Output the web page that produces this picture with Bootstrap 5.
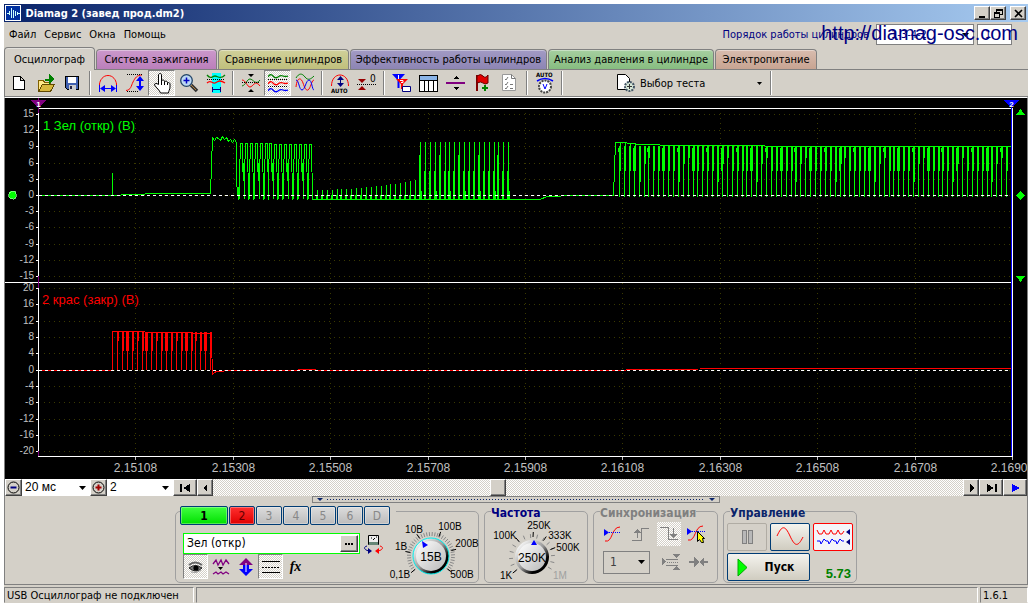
<!DOCTYPE html>
<html lang="ru">
<head>
<meta charset="utf-8">
<meta name="viewport" content="width=device-width, initial-scale=1">
<title>Diamag 2</title>
<link rel="stylesheet" href="https://cdn.jsdelivr.net/npm/bootstrap@5.3.0/dist/css/bootstrap.min.css">
<style>
  :root { --face:#d4d0c8; --shade:#808080; --navy:#0a246a; }
  body { background:#fff; color:#000; font:11px/13px "DejaVu Sans Condensed","DejaVu Sans",sans-serif; padding:4px; }
  button, input, select { font:inherit; color:inherit; border-radius:0; }
  svg { display:block; flex:none; }
  .pix { shape-rendering:crispEdges; }
  .app { background:var(--face); }
  .titlebar { height:18px; padding:0 2px 0 1px; background:linear-gradient(90deg,#0a246a,#a6caf0); color:#fff; font-size:11px; }
  .raised { background:var(--face); border:1px solid; border-color:#fff #404040 #404040 #fff; box-shadow:inset -1px -1px 0 var(--shade); padding:0; display:flex; align-items:center; justify-content:center; }
  .winbtn { width:16px; height:14px; }
  .menubar { height:25px; padding:0 16px 0 5px; }
  .menubar a { color:#000; text-decoration:none; }
  .order { color:#000080; gap:3px; }
  .order select, .order input { height:21px; border:1px solid var(--shade); background-color:#fff; color:#000080; padding:0 4px; }
  .order select { width:98px; padding-left:14px; }
  .order input { width:35px; padding-left:7px; }
  .site { right:10px; top:-1px; font:20px/24px "Liberation Sans",Arial,sans-serif; color:#000080 !important; z-index:2; }
  .arrow { appearance:none; background:#fff url("data:image/svg+xml,%3Csvg xmlns='http://www.w3.org/2000/svg' width='7' height='4'%3E%3Cpath d='M0 0h7L3.500 4z'/%3E%3C/svg%3E") no-repeat right 4px center; }
  .pagetabs { height:23px; border-bottom:1px solid var(--shade); gap:1px; }
  .pagetabs button { height:20px; border:1px solid var(--shade); border-bottom:0; border-radius:4px 4px 0 0; padding:0; font-size:11px; white-space:nowrap; box-shadow:inset 0 1px 0 #ffffff60; }
  .pagetabs .current { height:23px; margin-bottom:-1px; background:var(--face); width:91px; }
  .t-ign { background:linear-gradient(#cb98cb,#bb7fbb); width:121px; }
  .t-cmp { background:linear-gradient(#d0d09a,#c0c07c); width:131px; }
  .t-eff { background:linear-gradient(#a29ac4,#8d85b4); width:197px; }
  .t-prs { background:linear-gradient(#a6cfa0,#87bd80); width:166px; }
  .t-pwr { background:linear-gradient(#d8bcae,#c8a492); width:102px; }
  .tools { height:27px; border-left:1px solid var(--shade); border-bottom:1px solid var(--shade); }
  .tools button { width:27px; height:26px; border:1px solid transparent; background:none; padding:0; display:flex; align-items:center; justify-content:center; }
  .tools .wide { width:156px; padding-left:4px; justify-content:flex-start; font-size:11px; margin-left:45px; }
  .tools .sep { width:8px; height:24px; }
  .sep::after { content:""; display:block; width:2px; height:24px; margin-left:3px; background:linear-gradient(90deg,var(--shade) 50%,#fff 50%); }
  .tools .down, .chan .tb.down { background:repeating-conic-gradient(#fff 0 25%,var(--face) 0 50%) 0 0/2px 2px; border:1px solid; border-color:var(--shade) #fff #fff var(--shade); }
  .scope { border-top:1px solid #fff; border-left:1px solid var(--shade); border-right:1px solid var(--shade); }
  .scope > svg { width:100%; height:auto; background:#000; }
  .scope text { font-family:"Liberation Sans",Arial,sans-serif; }
  .transport { height:17px; border-left:1px solid var(--shade); border-right:1px solid var(--shade); }
  .transport .raised { width:24px; height:17px; flex:none; }
  .transport .zoomer { width:17px; }
  .transport .stepper { width:16px; }
  .transport select { height:17px; border:0; padding:0 0 0 3px; width:66px; font:12px/15px "Liberation Sans",Arial,sans-serif; flex:none; }
  .transport .span { width:68px; }
  .scroller { appearance:none; min-width:0; height:17px; margin:0; background:repeating-conic-gradient(#fff 0 25%,var(--face) 0 50%) 0 0/2px 2px; }
  .scroller::-webkit-slider-thumb { appearance:none; width:16px; height:17px; background:var(--face); border:1px solid; border-color:#fff #404040 #404040 #fff; box-shadow:inset -1px -1px 0 var(--shade); }
  .controls { border-left:1px solid var(--shade); border-bottom:1px solid var(--shade); border-right:1px solid var(--shade); height:89px; }
  .grip { width:408px; height:7px; border:1px solid var(--shade); padding:0 4px; }
  .grip i { height:1px; background:repeating-linear-gradient(90deg,var(--navy) 0 1px,transparent 1px 3px); }
  .groups { gap:5px; }
  .panel { border:1px solid #a0a0a0; border-radius:5px; height:72px; margin-top:8px; }
  .panel h2 { font-size:12px; line-height:12px; font-weight:700; margin:-5px 0 0 6px; background:var(--face); width:max-content; }
  .p-chan { width:304px; } .p-freq { width:104px; } .p-sync { width:125px; } .p-ctl { width:134px; }
  .chsel { margin:-6px 0 0 4px; gap:1px; background:var(--face); width:216px; }
  .chsel button { width:26px; height:19px; padding:0; border:1px solid #003c74; border-radius:2px; box-shadow:inset 0 0 0 1px #ffffff50; background:linear-gradient(#dcdcdc,#bcbcbc); color:#888; font-size:12px; line-height:14px; }
  .chsel .g { width:48px; background:linear-gradient(#40ff40,#00e000); color:#000; font-weight:700; }
  .chsel .r { background:linear-gradient(#ff3030,#e00000); color:#600000; }
  .chan { width:204px; margin-left:7px; }
  .namebox { width:177px; height:21px; border:1px solid #0f0; background:#fff; }
  .namebox input { border:0; background:none; padding:0 3px; min-width:0; font-size:12px; }
  .namebox .raised { width:18px; height:17px; margin-right:1px; }
  .chan .tb { width:25px; height:25px; border:1px solid transparent; background:none; padding:0; display:flex; align-items:center; justify-content:center; }
  .fx { font:italic 700 14px "Liberation Serif",serif; }
  .knob text { font:10px "Liberation Sans",Arial,sans-serif; }
  .knob .reading { font-size:12px; }
  #volts { margin:6px 0 0 -10px; }
  .sync { padding:3px 5px; }
  .sync button { border:0; background:none; padding:0; width:28px; height:24px; display:flex; align-items:center; justify-content:center; }
  .sync .pick { width:24px; margin:0 2px; background:repeating-conic-gradient(#fff 0 25%,var(--face) 0 50%) 0 0/2px 2px; }
  .sync select { width:48px; height:23px; border:1px solid var(--shade); background-color:var(--face); padding:0 6px; font-size:12px; color:#404040; }
  .ctl { gap:2px 3px; padding:4px 3px 0; }
  .ctl button { width:40px; height:28px; padding:0; border:1px solid #003c74; border-radius:2px; background:linear-gradient(#f4f3ee,#d0ccc0); display:flex; align-items:center; justify-content:center; }
  .ctl .off { border-color:#b0aca4; background:var(--face); }
  .ctl .on { border-color:#f00; background:#f4f4f8; }
  .ctl .start { width:83px; font-size:12px; font-weight:700; gap:17px; padding-right:6px; }
  .ctl output { font:700 13px/15px "Liberation Sans",Arial,sans-serif; color:#008000; width:40px; text-align:right; padding:13px 2px 0 0; }
  .status { height:18px; padding-top:2px; gap:2px; }
  .status > div { border:1px solid; border-color:var(--shade) #fff transparent var(--shade); height:16px; padding:1px 2px; line-height:14px; }
  .s1 { width:190px; white-space:nowrap; } .s3 { width:48px; }
</style>
</head>
<body>
<main class="app d-flex flex-column">
  <header class="titlebar d-flex align-items-center">
    <svg class="pix" width="17" height="16" viewBox="0 0 17 16"><path fill="#0030a0" stroke="#fff" d="M.5.500h15v15H.500z"/><path d="M2 8h2M4.500 6v4M6.500 3v10M8.500 5v8M10.500 6v5M12.500 7v3M13 8h2" stroke="#cff" fill="none"/></svg>
    <strong class="me-auto">&nbsp;Diamag 2 (завед прод.dm2)</strong>
    <button class="raised winbtn" aria-label="Свернуть"><svg class="pix" width="9" height="9"><path d="M1 7h6v2H1z"/></svg></button>
    <button class="raised winbtn" aria-label="Восстановить"><svg class="pix" width="9" height="9" fill="none" stroke="#000"><path d="M2.500 3V.500h6v5H6M2 1.500h7M.500 3.500h5v5h-5zM0 4.500h6"/></svg></button>
    <button class="raised winbtn ms-1" aria-label="Закрыть"><svg width="9" height="9" stroke="#000" stroke-width="1.600"><path d="M1 1l7 7M8 1L1 8"/></svg></button>
  </header>

  <nav class="menubar d-flex align-items-center position-relative">
    <div class="d-flex gap-2 me-auto"><a href="#">Файл</a><a href="#">Сервис</a><a href="#">Окна</a><a href="#">Помощь</a></div>
    <form class="order d-flex align-items-center">
      <label for="order">Порядок работы цилиндров</label>
      <select id="order" class="arrow ms-1"><option>1-3-4-2</option></select>
      <input id="first" aria-label="Цилиндр" value="1">
    </form>
    <a class="site position-absolute" href="#">http://diamag-osc.com</a>
  </nav>

  <div class="pagetabs d-flex align-items-end" role="tablist">
    <button class="current" role="tab">Осциллограф</button>
    <button class="t-ign" role="tab">Система зажигания</button>
    <button class="t-cmp" role="tab">Сравнение цилиндров</button>
    <button class="t-eff" role="tab">Эффективность работы цилиндров</button>
    <button class="t-prs" role="tab">Анализ давления в цилиндре</button>
    <button class="t-pwr" role="tab">Электропитание</button>
  </div>

  <div class="tools d-flex align-items-center" role="toolbar">
    <button aria-label="Новый"><svg class="pix" width="14" height="16" fill="#fff" stroke="#000"><path d="M1.500 1.500h7l4 4v9h-11zM8.500 1.500v4h4"/></svg></button>
    <button aria-label="Открыть"><svg class="pix" width="20" height="20"><path d="M2.500 18.500v-11h5l1 2h6v3" fill="#ffe88a" stroke="#806000"/><path d="M2.500 18.500l4-7h12l-4 7z" fill="#d8b840" stroke="#604800"/><path d="M13 1l6 5-6 5V8h-4V6h4z" fill="#008000"/></svg></button>
    <button aria-label="Сохранить"><svg class="pix" width="15" height="15"><path d="M.500.500h13v13H2.500l-2-2z" fill="#4060b0" stroke="#000"/><path d="M3 1h8v6H3z" fill="#fff"/><path d="M4 9h7v5H4z" fill="#ccc"/><path d="M5 10h2v3H5z" fill="#224"/></svg></button>
    <span class="sep"></span>
    <button aria-label="Период"><svg width="20" height="20" fill="none"><path d="M1.500 14v-3C2 7 5 2.500 10 2.500S18 7 18.500 11v3" stroke="red"/><path d="M1.500 12v7M18.500 12v7M3 15.500h14" stroke="#00f"/><path d="M2 15.500l5-3.500v7zM18 15.500l-5-3.500v7z" fill="#00f"/></svg></button>
    <button aria-label="Амплитуда"><svg width="20" height="20" fill="none"><path d="M1 17.500C6 17 6 13 8 9s4-7 9-7" stroke="red"/><path d="M2 1.500h16M2 18.500h12" stroke="#000" stroke-dasharray="1 1"/><path d="M15 6v9" stroke="#00f" stroke-width="2"/><path d="M15 3l4 5h-8zM15 18l4-5h-8z" fill="#00f"/></svg></button>
    <button class="down" aria-label="Рука"><svg width="20" height="22" fill="#fff" stroke="#000"><path d="M6.500 12.500V3c0-2 3-2 3 0v6.500c0-2 3-2 3 0v1c0-2 3-1.500 3 0v1c0-1.500 2.500-1 2.500.500V15c0 3-1.500 3.500-1.500 6h-8c-1-3-4-5-6-8 0-2 2-2 4-.500z"/><path d="M9.500 9v4M12.500 10v3M15.500 11v2"/></svg></button>
    <button aria-label="Увеличить"><svg width="20" height="20"><path d="M12 12l6 6" stroke="#333" stroke-width="3.500"/><path d="M12 12l5 5" stroke="#b08040"/><circle cx="7.500" cy="7.500" r="5.800" fill="#bcd8f4" stroke="#246" stroke-width="1.300"/><path d="M4.500 7.500h6M7.500 4.500v6" stroke="#0000c0" stroke-width="1.500"/></svg></button>
    <button aria-label="Участок"><svg width="20" height="20" fill="none"><path d="M6 0h9v20H6z" fill="#0ff"/><path d="M1 2c4 5 5 1 8 1s5 4 10-1" stroke="#008000" stroke-width="1.300"/><path d="M1 10c4-4 5 1 8 0s4-4 10 0" stroke="red" stroke-width="1.300"/><path d="M1 6.500h18" stroke="#000" stroke-dasharray="1 1"/><path d="M7 16.500h7M6.500 14v5M14.500 14v5" stroke="#000080"/></svg></button>
    <span class="sep"></span>
    <button aria-label="Совместить"><svg width="20" height="20" fill="none"><path d="M1 13c4-1 5-7 8-7s6 7 10 1" stroke="#008000"/><path d="M1 7c4 0 5 7 8 7s5-8 10-1" stroke="red"/><path d="M1 9.500h18" stroke="#000" stroke-dasharray="1 1"/><path d="M7 1h6l-3 3zM7 19h6l-3-3z" fill="#000"/></svg></button>
    <button class="down" aria-label="Разделить"><svg width="20" height="20" fill="none"><path d="M0 4q2.500-4 5-1t5 1 5-1 5 0" stroke="#008000" stroke-width="1.300"/><path d="M0 11q2.500-4 5-1t5 1 5-1 5 0" stroke="red" stroke-width="1.300"/><path d="M0 18q2.500-4 5-1t5 1 5-1 5 0" stroke="#00f" stroke-width="1.300"/><path d="M0 6.500h20M0 13.500h20" stroke="#000" stroke-dasharray="1 1"/></svg></button>
    <button aria-label="Наложить"><svg width="20" height="20" fill="none"><path d="M1 5c3-5 6-5 9-1s6 2 9-1" stroke="#008000"/><path d="M1 14C2 4 6 4 8 10s4 9 6 6 3-9 5-9" stroke="red"/><path d="M1 7c3 0 3 10 6 10s4-10 7-10 3 10 5 10" stroke="#00f"/></svg></button>
    <span class="sep"></span>
    <button aria-label="Автомасштаб"><svg width="20" height="21" fill="none"><path d="M1.500 13c0-7 4-11 8.500-11s8.500 4 8.500 11" stroke="red"/><path d="M10.500 4v8" stroke="#000080"/><path d="M7 7l3.500-4L14 7zM7 10l3.500 4 3.500-4z" fill="#000080"/><text x="1" y="20" font-size="6" font-weight="700" fill="#000">AUTO</text></svg></button>
    <button aria-label="Ноль"><svg width="20" height="20"><path d="M0 11.500h20" stroke="#000" stroke-dasharray="1 1"/><path d="M1 6h8l-4 4zM1 17h8l-4-4z" fill="#900"/><text x="13" y="9" font-size="10">0</text></svg></button>
    <span class="sep"></span>
    <button aria-label="Метки"><svg width="20" height="20"><path d="M0 1h13L7.500 7v8h-2V7z" fill="#00f"/><path d="M4 6h12l-5 5v5H9v-5z" fill="red"/><path d="M6.500 2v4M8 7.500h3v2H9" stroke="#fff" fill="none"/><path d="M10.500 13.500h8v5h-8z" fill="#fff" stroke="#000080"/></svg></button>
    <button aria-label="Таблица"><svg class="pix" width="19" height="17"><path d="M.500.500h18v16H.500z" fill="#fff" stroke="#000"/><path d="M1 1h17v4H1z" fill="#8ab4e8"/><path d="M.500 5.500h18M5.500 5v11M9.500 5v11M14.500 5v11" stroke="#000"/></svg></button>
    <button aria-label="Линия"><svg class="pix" width="19" height="20"><path d="M0 9h19v2H0z" fill="#800080"/><path d="M7 6h6l-3-3zM7 14h6l-3 3z"/></svg></button>
    <button aria-label="Флаг"><svg width="20" height="20"><path d="M4 2v16" stroke="#800000" stroke-width="2"/><path d="M4 3q4-3 6 0t5-1v8q-3 2-5 0t-6 0z" fill="#e00000" stroke="#600"/><path d="M12 12v6M9 15h6" stroke="#008000" stroke-width="2"/></svg></button>
    <button aria-label="Список"><svg width="15" height="18" fill="none"><path d="M.500.500h9l4 4v12H.500z" fill="#fff" stroke="#999"/><path d="M3 5l1 1 2-3M3 10l1 1 2-3M3 14l1 1 2-3M8 10.500h3M8 14.500h3M9.500.500v4h4" stroke="#777"/></svg></button>
    <span class="sep"></span>
    <button aria-label="Автовольты"><svg width="20" height="22"><text x="1" y="5" font-size="6" font-weight="700">AUTO</text><path d="M2 9q8-5 16 0" stroke="#00f" fill="none" stroke-width="1.500"/><circle cx="10" cy="14.500" r="6" fill="#fff" stroke="#444" stroke-width="2" stroke-dasharray="2 1"/><path d="M8 12l2 5 2-5" stroke="#00f" fill="none"/></svg></button>
    <span class="sep"></span>
    <button class="wide"><svg width="20" height="20"><path d="M1.500 1.500h8l4 4v11h-12z" fill="#fff" stroke="#000"/><circle cx="13.500" cy="13.500" r="4.500" fill="#d8e8d8" stroke="#456" stroke-width="2" stroke-dasharray="2 1"/><path d="M13.500 11v5M11 13.500h5" stroke="#333"/></svg><span class="ms-1 me-auto">Выбор теста</span><svg class="me-1" width="5" height="3"><path d="M0 0h5L2.500 3z"/></svg></button>
    <span class="sep"></span>
  </div>

  <section class="scope">
    <svg class="pix" viewBox="5 98 1022 381" id="plot" role="img" aria-label="Осциллограмма"></svg>
  </section>

  <div class="transport d-flex align-items-center">
    <button class="raised zoomer" aria-label="Сжать"><svg width="13" height="13" fill="none" stroke="#000"><circle cx="6.500" cy="6.500" r="5.500"/><path d="M3.500 6.500h6" stroke="#000080" stroke-width="2"/></svg></button>
    <select class="arrow span" aria-label="Развёртка"><option>20 мс</option></select>
    <button class="raised zoomer" aria-label="Растянуть"><svg width="13" height="13" fill="none" stroke="#000"><circle cx="6.500" cy="6.500" r="5.500"/><path d="M3.500 6.500h6M6.500 3.500v6" stroke="#a00000" stroke-width="2"/></svg></button>
    <select class="arrow" aria-label="Масштаб"><option>2</option></select>
    <button class="raised" aria-label="В начало"><svg class="pix" width="11" height="8"><path d="M0 0h2v8H0zM10 0v8L3 4z"/></svg></button>
    <button class="raised stepper" aria-label="Назад"><svg class="pix" width="5" height="8"><path d="M4 0v8L0 4z"/></svg></button>
    <input class="scroller flex-grow-1" type="range" min="0" max="1000" value="377" aria-label="Прокрутка">
    <button class="raised stepper" aria-label="Вперёд"><svg class="pix" width="5" height="8"><path d="M1 0v8l4-4z"/></svg></button>
    <button class="raised" aria-label="В конец"><svg class="pix" width="11" height="8"><path d="M9 0h2v8H9zM1 0v8l7-4z"/></svg></button>
    <button class="raised" aria-label="Воспроизвести"><svg class="pix" width="9" height="8" fill="#00f"><path d="M1 0v8l8-4z"/></svg></button>
  </div>

  <section class="controls d-flex flex-column align-items-center">
    <div class="grip d-flex align-items-center gap-1"><svg width="6" height="3" fill="#0a246a"><path d="M0 0h6L3 3z"/></svg><i class="flex-grow-1"></i><svg width="6" height="3" fill="#0a246a"><path d="M0 0h6L3 3z"/></svg></div>
    <div class="groups d-flex">
      <div class="panel p-chan d-flex">
        <div>
          <div class="chsel d-flex"><button class="g">1</button><button class="r">2</button><button>3</button><button>4</button><button>5</button><button>6</button><button>D</button></div>
          <div class="chan">
            <div class="d-flex align-items-center gap-1 mt-2">
              <div class="namebox d-flex align-items-center"><input class="flex-grow-1" value="Зел (откр)" aria-label="Имя канала"><button class="raised" aria-label="Выбрать"><svg class="pix" width="8" height="2"><path d="M0 0h2v2H0zM3 0h2v2H3zM6 0h2v2H6z"/></svg></button></div>
              <svg width="20" height="20" fill="none"><path d="M4.500 1.500h10v9h-10z" fill="#eee" stroke="#000"/><path d="M5 8h9v3H5z" fill="#687"/><path d="M7 4h1M9 6l2-2M12 3h1" stroke="#000"/><path d="M3 12c-4 1-3 4 2 5" stroke="#000080"/><path d="M16 12c4 1 3 4-2 5" stroke="red"/><path d="M4 14l4 3-4 3z" fill="#000080"/><path d="M15 14l-4 3 4 3z" fill="red"/></svg>
            </div>
            <div class="d-flex">
              <button class="tb down" aria-label="Показать"><svg width="16" height="14"><path d="M1 5q6-5 13 0" stroke="#666" stroke-width="2" fill="none"/><path d="M1 8q6-5 13 0-6 6-13 0z" fill="#777" stroke="#222"/><circle cx="8" cy="8" r="2.600"/><path d="M3 12q6 2 10-2" stroke="#999" fill="none"/></svg></button>
              <button class="tb" aria-label="Фильтр"><svg width="18" height="18" fill="none" stroke="#800080" stroke-width="1.300"><path d="M1 6l3-4 2 5 3-5 2 5 3-5 3 4"/><path d="M1 16l3-2 2 2 3-2 2 2 3-2 3 2"/><path d="M6 9h5l-2.500 3z" fill="#000" stroke="none"/></svg></button>
              <button class="tb" aria-label="Сдвиг"><svg width="16" height="18"><path d="M8 0l7 7h-4v4H5V7H1z" fill="#800080"/><path d="M8 18l7-7h-4V7H5v4H1z" fill="#00f"/><path d="M8 5v9" stroke="#fff"/></svg></button>
              <button class="tb down" aria-label="Уровень"><svg class="pix" width="18" height="16" stroke="#000"><path d="M0 2.500h18M0 13.500h18"/><path d="M0 8.500h18" stroke-dasharray="2 1"/></svg></button>
              <button class="tb" aria-label="Функция"><span class="fx">fx</span></button>
            </div>
          </div>
        </div>
        <svg class="knob" id="volts" width="98" height="64" viewBox="384 518 98 64"></svg>
      </div>
      <div class="panel p-freq">
        <h2 style="color:#000080">Частота</h2>
        <svg class="knob mx-auto" id="freq" width="94" height="62" viewBox="490 518 94 62"></svg>
      </div>
      <div class="panel p-sync">
        <h2 style="color:#808080">Синхронизация</h2>
        <div class="sync d-flex flex-column gap-1">
          <div class="d-flex">
            <button aria-label="Фронт"><svg width="18" height="18" fill="none"><path d="M1 16c8 2 6-14 15-14" stroke="red"/><path d="M1 7.500h16" stroke="#00f" stroke-dasharray="1 1"/><path d="M0 4v7l5-3.500z" fill="#00f"/></svg></button>
            <button aria-label="Подъём"><svg class="pix" width="18" height="16" fill="none" stroke="#808080"><path d="M0 14.500h9.500v-12H17M5.500 5v7"/><path d="M2 7h7L5.500 3z" fill="#808080" stroke="none"/></svg></button>
            <button class="pick" aria-label="Спад"><svg class="pix" width="18" height="16" fill="none" stroke="#808080"><path d="M0 1.500h8.500v12H18M13.500 2v8"/><path d="M10 8h7l-3.500 4z" fill="#808080" stroke="none"/></svg></button>
            <button aria-label="Ручной"><svg width="20" height="18" fill="none"><path d="M1 15c8 2 6-14 15-14" stroke="red"/><path d="M1 6.500h18" stroke="#00f" stroke-dasharray="1 1"/><path d="M0 3v7l5-3.500z" fill="#00f"/><path d="M10.500 6.500v10l2-2 2 3h2l-1-4h2z" fill="#ff0" stroke="#000"/></svg></button>
          </div>
          <div class="d-flex align-items-center">
            <select class="arrow ms-1 me-2" aria-label="Канал"><option>1</option></select>
            <button aria-label="Уровень"><svg class="pix" width="19" height="16" fill="#808080"><path d="M0 4v7l4-3.500zM11 0h7l-3.500 4zM11 16h7l-3.500-4zM4 5h12v1H4zM4 11h12v1H4z"/><path d="M5 8.500h12" stroke="#808080" stroke-dasharray="1 1"/></svg></button>
            <button aria-label="Сжать"><svg class="pix" width="19" height="10" fill="#808080"><path d="M0 4h5V0l5 5-5 5V6H0zM19 4h-4V0l-5 5 5 5V6h4z"/></svg></button>
          </div>
        </div>
      </div>
      <div class="panel p-ctl">
        <h2 style="color:#0a246a">Управление</h2>
        <div class="ctl d-flex flex-wrap">
          <button class="off" aria-label="Пауза"><svg class="pix" width="11" height="15" fill="#b8b8b8" stroke="#808080"><path d="M.500.500h4v13h-4zM6.500.500h4v13h-4z"/></svg></button>
          <button aria-label="Сигнал"><svg width="28" height="20" fill="none" stroke="red"><path d="M1 9C6-2 9-2 14 9s8 11 13 1"/></svg></button>
          <button class="on" aria-label="Запись"><svg width="34" height="18" fill="none"><path d="M1 2l2 4h3l2-4 2 4h3l2-4 2 4h3l2-4 2 4h2l2-3" stroke="red"/><path d="M1 13h3l1 3 3-5 2 2h2l1 3 3-5 2 2h2l1 3 3-5 2 2h2" stroke="#00f"/><path d="M34 1v6l-4-3zM34 11v6l-4-3z" fill="#000080"/></svg></button>
          <button class="start"><svg width="11" height="19"><path d="M1 1v17l9-8.500z" fill="#0f0" stroke="#0a0"/></svg>Пуск</button>
          <output>5.73</output>
        </div>
      </div>
    </div>
  </section>

  <footer class="status d-flex">
    <div class="s1">USB Осциллограф не подключен</div><div class="flex-grow-1"></div><div class="s3">1.6.1</div>
  </footer>
</main>

<script src="https://cdn.jsdelivr.net/npm/bootstrap@5.3.0/dist/js/bootstrap.bundle.min.js"></script>
<script>
  const P = 4.9; // pulse period on the time axis
  const line = (d, c, w = 1, extra = '') => `<path d="${d}" fill="none" stroke="${c}" stroke-width="${w}" ${extra}/>`;
  const txt = (x, y, s, c, size, anchor = 'end') => `<text x="${x}" y="${y}" fill="${c}" font-size="${size}" text-anchor="${anchor}">${s}</text>`;
  const r = Math.round;
  let out = '';

  // dotted grid, tick marks and value labels for the two channels
  const rows1 = [114,130,146,163,179,195,211,227,244,260,276];
  const rows2 = [288,304,321,337,353,370,386,402,419,435,451];
  const cols = [135,233,330,428,525,622,720,817,915,1012];
  const grid = [...rows1, ...rows2].map(y => `M44 ${y}.5H1011`).join('');
  out += line(grid, '#3a3a00', 1, 'stroke-dasharray="1 4"');
  out += line(cols.slice(0, 9).map(x => `M${x}.5 113V456`).join(''), '#3a3a00', 1, 'stroke-dasharray="1 4"');
  rows1.forEach((y, i) => out += txt(34, y + 3, 15 - 3 * i, '#c0c0c0', 10));
  rows2.forEach((y, i) => out += txt(34, y + 3, 20 - 4 * i, '#c0c0c0', 10));
  out += line([...rows1, ...rows2].map(y => `M36 ${y}.5h3`).join(''), '#fff');
  cols.forEach((x, i) => out += txt(x + .5, 472, (2.15108 + i * .002).toFixed(5), '#c0c0c0', 12, 'middle'));
  out += line(cols.map(x => `M${x}.5 457v3`).join(''), '#c0c0c0');

  // channel 1
  let g = 'M39 195.5H112.5V173V195.5L130 194.5L160 193.5H210.5L212.5 138';
  [140,137,138,140,136,139,137,141,139,142,139,142].forEach((y, i) => g += `L${214 + i * 2}.5 ${y}.5`);
  g += 'V183L238.5 199.5';
  for (let i = 0; i < 15; i++) {
    const x = r(239 + i * P), t = i < 7 ? 143 : 144;
    g += `L${x}.5 175L${x + 1}.5 ${t}.5H${x + 3}.5L${x + 4}.5 ${i % 3 ? 199 : 180}.5`;
    out += line(`M${x}.5 160V199M${x + 3}.5 145V172`, '#0f0');
  }
  g += 'L312.5 189.5V199.5H540L547 196.5L575 195.5L613.5 195.5L615.5 142.5H622L640 144.5L680 145.5L740 145.5L790 146.5L1011 146.500';
  out += line(g, '#0f0');
  let s = '', fat = '';
  for (let x = 317; x < 417; x += P) {
    const h = 190 - 10 * Math.pow((x - 312) / 105, 2);
    s += `M${r(x)}.5 199V${r(h)}`; fat += `M${r(x) - 1}.5 199V195`;
  }
  for (let i = 0; i < 19; i++) {
    const x = r(420 + i * P);
    s += `M${x}.5 199V142`; fat += `M${x - 1}.5 199V${i % 4 ? 171 : 155}`;
    if (i % 3 == 0) fat += `M${x + 1}.5 199V191`;
  }
  for (let i = 0; i < 81; i++) {
    const x = r(619 + i * P); if (x > 1010) break;
    s += `M${x}.5 146V196.5`; fat += `M${x + 1}.5 ${i < 4 ? 143 : 146}V${[171,171,158,171,182,171,171,164][(i * 3) % 8]}`;
    if (i % 3 == 0) fat += `M${x - 1}.5 148V${i % 2 ? 171 : 152}`;
  }
  out += line(s + fat, '#0f0');

  // channel 2
  let d = 'M39 370.5H112.5V331.5L120 331.5L170 332.5L211.5 333.5V341L212.5 374.5L216 371.5L232 370.5H285L312 369.5L320 370.5H612L640 369.5L760 368.5H1011';
  for (let i = 0; i < 20; i++) {
    const x = r(117 + i * P);
    d += `M${x}.5 332V369.5M${x + 1}.5 332V${i % 4 ? 351 : 341}` + (i % 4 == 2 ? `M${x - 1}.5 332V351` : '');
  }
  out += line(d, 'red');
  out += line('M39 195.5H1011M39 370.5H1011', '#fff', 1, 'stroke-dasharray="3 3"');

  // frame and the two cursors
  out += line('M38.500 108.500H1012.500M5 282.500H1012.500M38.500 108V457M38 456.500H1012.500V108', '#fff');
  out += line('M38.500 98V113M38.500 276V288M38.500 451V456', '#800080') + line('M1011.500 105V456', '#00f');
  out += '<path d="M31 100h15l-7.500 8z" fill="#800080"/><path d="M1004 100h15l-7.500 8z" fill="#00f"/>';
  out += '<text x="38.500" y="107" font-size="8" font-weight="700" text-anchor="middle" fill="#fff">1</text><text x="1011.500" y="107" font-size="8" font-weight="700" text-anchor="middle" fill="#fff">2</text>';
  out += '<path d="M1016 115h9l-4.500-6zM1016 276h9l-4.500 6zM1016 195.500l4.500-4.500 4.500 4.500-4.500 4.500z" fill="#0f0"/><circle cx="12.500" cy="195" r="4" fill="#0f0" stroke="#bfb" stroke-width=".6"/>';
  out += txt(43, 130, '1 Зел (откр) (В)', '#0f0', 13, 'start') + txt(42, 304, '2 крас (закр) (В)', 'red', 13, 'start');
  document.getElementById('plot').innerHTML = out;

  // rotary knobs: scale ticks, body, pointer and captions
  function knob(id, cx, cy, rad, step, long, ring, value, pointer, labels) {
    const pt = (a, q) => [cx + q * Math.sin(a * Math.PI / 180), cy - q * Math.cos(a * Math.PI / 180)].map(v => v.toFixed(1)).join(' ');
    const tick = (a, q1, q2) => `M${pt(a, q1)}L${pt(a, q2)}`;
    let fine = ''; for (let a = -130; a <= 130; a += step) fine += tick(a, rad + 2, rad + 6);
    let o = `<defs><linearGradient id="${id}g" x1=".1" y1=".1" x2=".9" y2=".9"><stop offset="0" stop-color="#fff"/><stop offset=".5" stop-color="#999"/><stop offset=".8" stop-color="#000"/></linearGradient><linearGradient id="${id}f" x2="1" y2="1"><stop stop-color="#fff"/><stop offset="1" stop-color="#b8b8b8"/></linearGradient></defs>`;
    o += line(fine, '#888') + line(long.map(a => tick(a, rad + 3, rad + 8)).join(''), '#000');
    o += `<circle cx="${cx}" cy="${cy}" r="${rad}" fill="url(#${id}g)" ${ring ? 'stroke="#0ee"' : ''}/><circle cx="${cx}" cy="${cy}" r="${rad - 3}" fill="url(#${id}f)"/><path d="${pointer}" fill="#00f"/>`;
    o += `<text class="reading" x="${cx}" y="${cy + 5}" text-anchor="middle">${value}</text>`;
    labels.forEach(l => o += txt(l[0], l[1], l[2], l[3] || '#000', 10, 'middle'));
    document.getElementById(id).innerHTML = o;
  }
  knob('volts', 429, 556, 18, 7, [-130,-80,-33,22,75,128], true, '15В', 'M420 541l6 4-5 3z',
    [[412,533,'10В'],[448,530,'100В'],[465,547,'200В'],[460,578,'500В'],[399,550,'1В'],[398,578,'0,1В']]);
  knob('freq', 533, 556, 17, 18, [-130,-40,3,35,68], false, '250K', 'M535 539l3 5h-6z',
    [[507,578,'1K'],[506,538,'100K'],[540,528,'250K'],[561,538,'333K'],[569,550,'500K'],[561,578,'1M','#a0a0a0']]);
</script>
</body>
</html>
